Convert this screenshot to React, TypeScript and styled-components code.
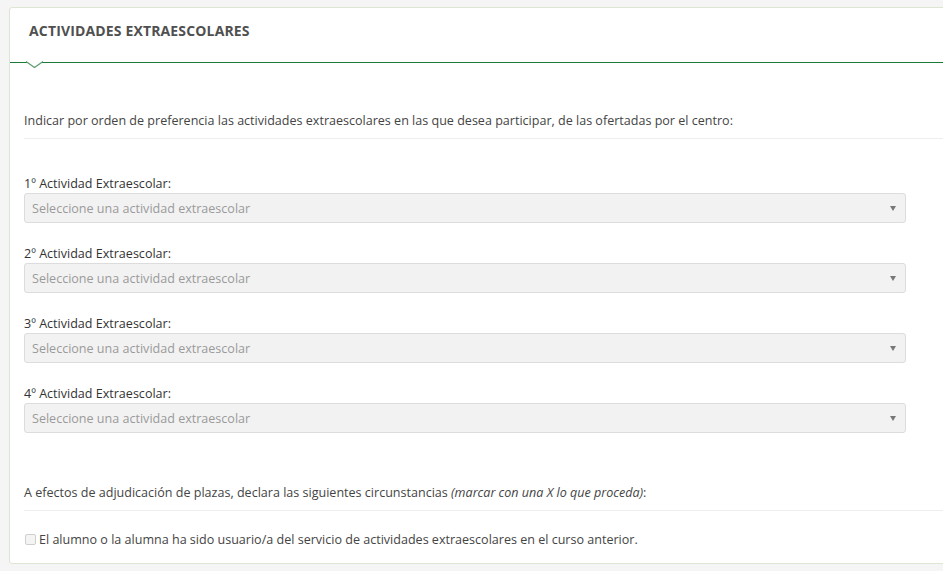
import React from 'react';
import styled, { createGlobalStyle } from 'styled-components';

const GlobalStyle = createGlobalStyle`
  html, body {
    margin: 0;
    padding: 0;
    background: #f5f5f5;
    overflow: hidden;
  }
  body {
    font-family: "Open Sans", "DejaVu Sans", sans-serif;
    font-size: 12.55px;
    color: #444;
  }
`;

const Page = styled.div`
  padding: 7px 0 0 9px;
  width: 980px;
`;

const Panel = styled.section`
  background: #fff;
  border: 1px solid #dbe6d3;
  border-radius: 3px;
`;

const Header = styled.header`
  position: relative;
  height: 55px;
  box-sizing: border-box;
  padding: 13px 0 0 19px;
  border-bottom: 1px solid #1c7a36;
`;

const Title = styled.h2`
  margin: 0;
  font-size: 14px;
  line-height: 20px;
  font-weight: 700;
  letter-spacing: 0.15px;
  color: #505050;
  text-transform: uppercase;
`;

const Notch = styled.svg`
  position: absolute;
  left: 16px;
  bottom: -7px;
`;

const Body = styled.div`
  padding: 48px 0 14px 14px;
`;

const Note = styled.p`
  margin: 0;
  line-height: 20px;
  padding-bottom: 7px;
  border-bottom: 1px solid #eee;
  color: #444;
`;

const Fields = styled.div`
  padding: 36px 0 50px;
  width: 882px;
  display: flex;
  flex-direction: column;
  gap: 22px;
`;

const Field = styled.label`
  display: flex;
  flex-direction: column;
`;

const LabelText = styled.span`
  line-height: 18px;
  color: #333;
`;

const Select = styled.div`
  height: 28px;
  display: flex;
  align-items: center;
  justify-content: space-between;
  padding: 0 9px 0 7px;
  background: #f2f2f2;
  border: 1px solid #dcdcdc;
  border-radius: 3px;
  color: #9a9a9a;
`;

const Caret = styled.span`
  width: 0;
  height: 0;
  border-left: 3px solid transparent;
  border-right: 3px solid transparent;
  border-top: 5px solid #777;
`;

const CheckRow = styled.label`
  display: flex;
  align-items: center;
  gap: 3px;
  padding: 20px 0 0 1px;
  line-height: 18px;
  color: #444;
`;

const Box = styled.span`
  width: 9px;
  height: 9px;
  border: 1px solid #cfcfcf;
  border-radius: 2px;
  background: #f4f4f4;
  margin-top: -1px;
`;

const activities = [1, 2, 3, 4];

export default function App() {
  return (
    <>
      <GlobalStyle />
      <Page>
        <Panel>
          <Header>
            <Title>Actividades extraescolares</Title>
            <Notch width="17" height="8" viewBox="0 0 17 8">
              <polyline points="0,0.5 8.5,6.5 17,0.5" fill="#fff" stroke="#5e9c6e" strokeWidth="1.2" />
            </Notch>
          </Header>
          <Body>
            <Note>
              Indicar por orden de preferencia las actividades extraescolares en las que desea participar, de las ofertadas por el centro:
            </Note>
            <Fields>
              {activities.map((n) => (
                <Field key={n}>
                  <LabelText>{n}º Actividad Extraescolar:</LabelText>
                  <Select>
                    <span>Seleccione una actividad extraescolar</span>
                    <Caret />
                  </Select>
                </Field>
              ))}
            </Fields>
            <Note>
              A efectos de adjudicación de plazas, declara las siguientes circunstancias <i>(marcar con una X lo que proceda)</i>:
            </Note>
            <CheckRow>
              <Box />
              El alumno o la alumna ha sido usuario/a del servicio de actividades extraescolares en el curso anterior.
            </CheckRow>
          </Body>
        </Panel>
      </Page>
    </>
  );
}
